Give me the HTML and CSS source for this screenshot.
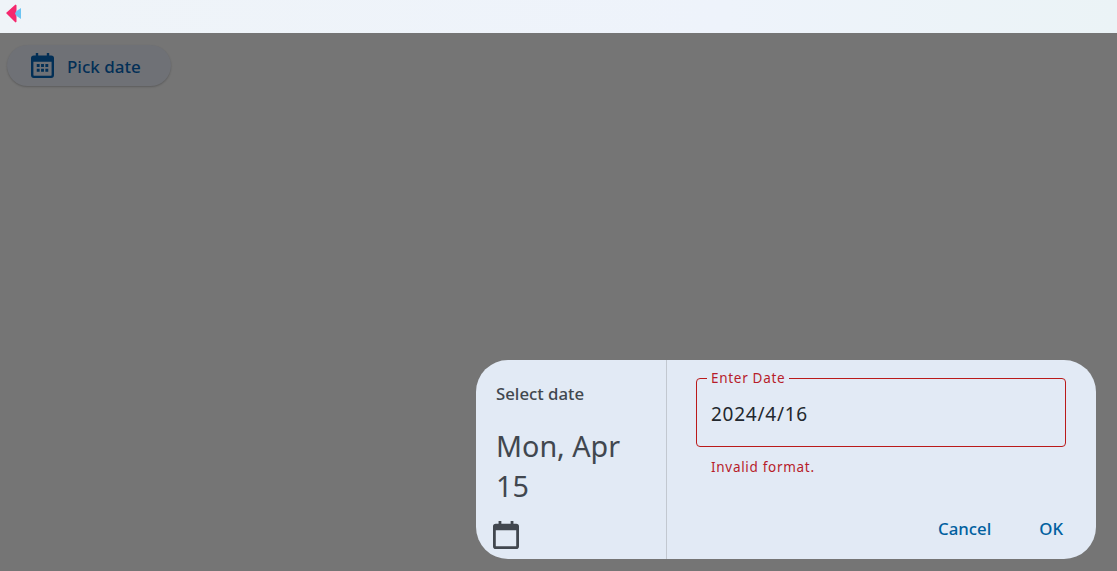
FILE: index.html
```html
<!DOCTYPE html>
<html lang="en">
<head>
<meta charset="utf-8">
<title>Pick date</title>
<link rel="stylesheet" href="styles.css">
</head>
<body>
<header class="titlebar">
  <svg class="logo" width="16" height="19" viewBox="0 0 16 19">
    <path fill="#6cc4f2" d="M7 9.500 15 3.900V15.100Z"/>
    <path fill="#f5286e" d="M0 9 9.500.4 10.500 1.200V6.400L9 9.500l1.500 3.100V17.800l-1 .8Z"/>
  </svg>
</header>
<main class="content">
  <button class="pick">
    <svg width="23" height="25" viewBox="0 0 24 26" preserveAspectRatio="none" class="pick-icon">
      <path fill="currentColor" fill-rule="evenodd" d="M5 0h2.500v2.500h9V0H19v2.500h2a3 3 0 0 1 3 3V23a3 3 0 0 1-3 3H3a3 3 0 0 1-3-3V5.500a3 3 0 0 1 3-3h2ZM2.500 9v14c0 .4.200.600.600.600h17.800c.4 0 .600-.2.600-.600V9ZM6 11.500h3v3H6Zm4.500 0h3v3h-3Zm4.500 0h3v3h-3ZM6 16.500h3v3H6Zm4.500 0h3v3h-3Zm4.500 0h3v3h-3Z"/>
    </svg>
    <span class="pick-label">Pick date</span>
  </button>
  <div class="scrim">
    <section class="dialog">
      <div class="side">
        <div class="side-title">Select date</div>
        <div class="side-date">Mon, Apr 15</div>
        <svg class="side-icon" width="26" height="28" viewBox="0 0 28 30" preserveAspectRatio="none">
          <path fill="currentColor" fill-rule="evenodd" d="M6 0h3v3h10V0h3v3h3a3 3 0 0 1 3 3v21a3 3 0 0 1-3 3H3a3 3 0 0 1-3-3V6a3 3 0 0 1 3-3h3ZM3 10v17h22V10Z"/>
        </svg>
      </div>
      <div class="body">
        <fieldset class="field">
          <legend class="field-label">Enter Date</legend>
          <span class="field-value">2024/4/16</span>
        </fieldset>
        <div class="error">Invalid format.</div>
        <div class="actions">
          <button class="action">Cancel</button>
          <button class="action">OK</button>
        </div>
      </div>
    </section>
  </div>
</main>
</body>
</html>
```

FILE: styles.css
```css
* { box-sizing: border-box; }
html, body { height: 100%; }
body {
  margin: 0;
  height: 571px;
  overflow: hidden;
  display: flex;
  flex-direction: column;
  font-family: "Noto Sans", "Open Sans", sans-serif;
  background: #757575;
}
.titlebar {
  height: 33px;
  flex: none;
  display: flex;
  align-items: center;
  padding: 0 0 0 6px;
  background: linear-gradient(90deg, #eff4f8 0%, #eef3fb 65%, #ebf3f6 100%);
}
.logo { display: block; margin-bottom: 6px; }
.content {
  position: relative;
  flex: 1;
  padding: 12px 7px;
  background: #757575;
}
.pick {
  display: flex;
  align-items: center;
  width: 164px;
  height: 41px;
  padding: 0 0 0 24px;
  gap: 13px;
  border: 0;
  border-radius: 21px;
  background: #6f7176;
  box-shadow: 0 1px 2px rgba(0, 0, 0, 0.22);
  color: #022f56;
  font-family: inherit;
  font-size: 17px;
  font-weight: 500;
}
.pick-icon { flex: none; }
.pick-label { padding-top: 2px; }
.scrim {
  position: absolute;
  inset: 0;
  display: flex;
  justify-content: flex-end;
  align-items: flex-end;
  padding: 0 21px 12px 0;
}
.dialog {
  display: flex;
  width: 620px;
  height: 199px;
  border-radius: 32px;
  background: #e2eaf5;
  overflow: hidden;
}
.side {
  width: 191px;
  flex: none;
  padding: 22px 16px 0 20px;
  border-right: 1px solid #c2c8d0;
  color: #41474f;
}
.side-title {
  font-size: 16.800px;
  font-weight: 500;
  line-height: 24px;
}
.side-date {
  margin-top: 20px;
  font-size: 28.700px;
  line-height: 40px;
}
.side-icon { display: block; margin: 15px 0 0 -3px; }
.body {
  flex: 1;
  display: flex;
  flex-direction: column;
  padding: 8px 30px 0 29px;
}
.field {
  margin: 0;
  height: 79px;
  padding: 13px 14px 0;
  border: 1px solid #ba1a1a;
  border-radius: 4px;
}
.field-label {
  padding: 0 4px;
  margin-left: -4px;
  font-size: 13.500px;
  line-height: 20px;
  letter-spacing: 0.7px;
  color: #b71c2a;
}
.field-value {
  display: block;
  font-size: 19px;
  line-height: 26px;
  letter-spacing: 0.75px;
  color: #23282e;
}
.error {
  margin: 11px 0 0 15px;
  font-size: 13.500px;
  line-height: 18px;
  letter-spacing: 0.7px;
  color: #b71c2a;
}
.actions {
  margin-top: 41px;
  display: flex;
  justify-content: flex-end;
  gap: 48px;
  padding-right: 3px;
}
.action {
  padding: 0;
  border: 0;
  background: none;
  font-family: inherit;
  font-size: 16.800px;
  font-weight: 500;
  line-height: 24px;
  color: #00609f;
}
```
